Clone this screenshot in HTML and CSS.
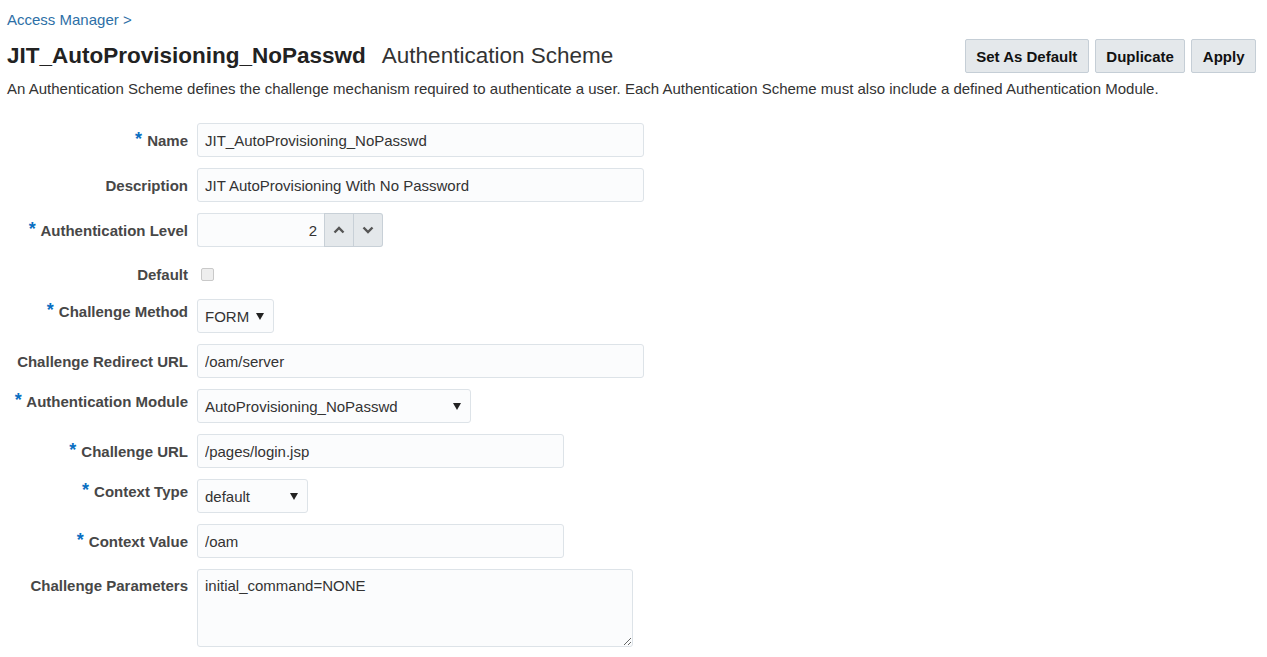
FILE: index.html
```html
<!DOCTYPE html>
<html>
<head>
<meta charset="utf-8">
<link rel="stylesheet" href="styles.css">
</head>
<body>
<div class="page">
  <div class="crumb"><a href="#">Access Manager</a> &gt;</div>
  <div class="header">
    <div class="titles">
      <h1 class="title">JIT_AutoProvisioning_NoPasswd</h1>
      <span class="subtitle">Authentication Scheme</span>
    </div>
    <div class="actions">
      <button class="btn">Set As Default</button>
      <button class="btn">Duplicate</button>
      <button class="btn">Apply</button>
    </div>
  </div>
  <p class="desc">An Authentication Scheme defines the challenge mechanism required to authenticate a user. Each Authentication Scheme must also include a defined Authentication Module.</p>

  <div class="form">
    <label class="lbl"><span class="req">*</span> Name</label>
    <input class="field w-lg" type="text" value="JIT_AutoProvisioning_NoPasswd">

    <label class="lbl">Description</label>
    <input class="field w-lg" type="text" value="JIT AutoProvisioning With No Password">

    <label class="lbl"><span class="req">*</span> Authentication Level</label>
    <div class="stepper">
      <input class="field num" type="text" value="2">
      <span class="step"><svg width="12" height="8" viewBox="0 0 12 8"><path d="M1.5 6.5 L6 2 L10.5 6.5" fill="none" stroke="#555" stroke-width="2.4"/></svg></span>
      <span class="step"><svg width="12" height="8" viewBox="0 0 12 8"><path d="M1.5 1.5 L6 6 L10.5 1.5" fill="none" stroke="#555" stroke-width="2.4"/></svg></span>
    </div>

    <label class="lbl short">Default</label>
    <div class="checkrow"><span class="check"></span></div>

    <label class="lbl sel"><span class="req">*</span> Challenge Method</label>
    <div class="field select w-method"><span>FORM</span><svg width="8" height="7" viewBox="0 0 8 7"><path d="M0 0 H8 L4 7 Z" fill="#222"/></svg></div>

    <label class="lbl">Challenge Redirect URL</label>
    <input class="field w-lg" type="text" value="/oam/server">

    <label class="lbl sel"><span class="req">*</span> Authentication Module</label>
    <div class="field select w-module"><span>AutoProvisioning_NoPasswd</span><svg width="8" height="7" viewBox="0 0 8 7"><path d="M0 0 H8 L4 7 Z" fill="#222"/></svg></div>

    <label class="lbl"><span class="req">*</span> Challenge URL</label>
    <input class="field w-md" type="text" value="/pages/login.jsp">

    <label class="lbl sel"><span class="req">*</span> Context Type</label>
    <div class="field select w-type"><span>default</span><svg width="8" height="7" viewBox="0 0 8 7"><path d="M0 0 H8 L4 7 Z" fill="#222"/></svg></div>

    <label class="lbl"><span class="req">*</span> Context Value</label>
    <input class="field w-md" type="text" value="/oam">

    <label class="lbl area">Challenge Parameters</label>
    <textarea class="field textarea">initial_command=NONE</textarea>
  </div>
</div>
</body>
</html>
```

FILE: styles.css
```css
* { box-sizing: border-box; }
html, body { margin: 0; padding: 0; background: #fff; }
body {
  font-family: "Liberation Sans", Arial, sans-serif;
  color: #333;
  font-size: 15px;
}
.page { padding: 0 11px 0 7px; }

.crumb {
  font-size: 15px;
  line-height: 16px;
  padding-top: 12px;
  color: #2d6fa6;
}
.crumb a { color: #2d6fa6; text-decoration: none; }

.header {
  display: flex;
  align-items: center;
  justify-content: space-between;
  margin-top: 11px;
  height: 34px;
}
.titles { display: flex; align-items: baseline; gap: 16px; }
.title {
  margin: 0;
  font-size: 22.5px;
  line-height: 26px;
  font-weight: bold;
  color: #222;
}
.subtitle { font-size: 22.5px; line-height: 26px; color: #333; }

.actions { display: flex; gap: 6px; }
.btn {
  height: 34px;
  padding: 0 10.5px;
  font-family: inherit;
  font-size: 15px;
  font-weight: bold;
  color: #111;
  background: #e4e8eb;
  border: 1px solid #c5ced6;
  border-radius: 2px;
}

.desc {
  margin: 7px 0 0;
  font-size: 15px;
  line-height: 17px;
  color: #333;
}

.form {
  display: grid;
  grid-template-columns: 181px auto;
  column-gap: 9px;
  row-gap: 11px;
  justify-items: start;
  margin-top: 26px;
}
.lbl {
  justify-self: end;
  text-align: right;
  font-weight: bold;
  font-size: 15px;
  line-height: 17px;
  color: #474747;
  padding-top: 9px;
  white-space: nowrap;
}
.lbl.sel { padding-top: 4px; }
.lbl.area { padding-top: 8px; }
.lbl.short { padding-top: 8px; }
.req {
  color: #0a6fc2;
  font-size: 18px;
  line-height: 10px;
  position: relative;
  top: -1px;
  margin-right: 1px;
}

.field {
  height: 34px;
  border: 1px solid #dde3e8;
  border-radius: 3px;
  background: #fbfcfd;
  font-family: inherit;
  font-size: 15px;
  color: #333;
  padding: 0 7px;
  outline: none;
}
.w-lg { width: 447px; }
.w-md { width: 367px; }

.stepper { display: flex; }
.stepper .num {
  width: 127px;
  text-align: right;
  border-radius: 3px 0 0 3px;
  border-right: none;
}
.step {
  width: 30px;
  height: 34px;
  display: flex;
  align-items: center;
  justify-content: center;
  background: #e4e8eb;
  border: 1px solid #c8d0d7;
}
.step + .step { border-left: none; border-radius: 0 3px 3px 0; width: 29px; }

.checkrow { height: 30px; padding: 10px 0 0 4px; }
.check {
  display: block;
  width: 13px;
  height: 13px;
  border: 1px solid #c9c9c9;
  border-radius: 2px;
  background: #eeeeee;
}

.select {
  display: flex;
  align-items: center;
  justify-content: space-between;
  padding: 0 9px 0 7px;
}
.w-method { width: 77px; }
.w-module { width: 274px; }
.w-type { width: 111px; }

.textarea {
  width: 436px;
  height: 78px;
  padding: 7px 7px;
  resize: both;
  line-height: 17px;
}
```
